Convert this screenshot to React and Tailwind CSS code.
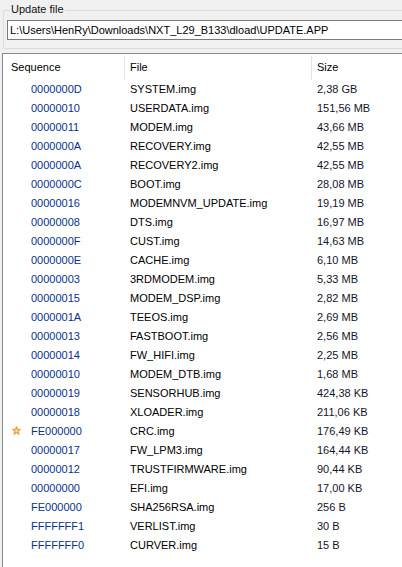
import React from "react";

const rows = [
  ["0000000D", "SYSTEM.img", "2,38 GB"],
  ["00000010", "USERDATA.img", "151,56 MB"],
  ["00000011", "MODEM.img", "43,66 MB"],
  ["0000000A", "RECOVERY.img", "42,55 MB"],
  ["0000000A", "RECOVERY2.img", "42,55 MB"],
  ["0000000C", "BOOT.img", "28,08 MB"],
  ["00000016", "MODEMNVM_UPDATE.img", "19,19 MB"],
  ["00000008", "DTS.img", "16,97 MB"],
  ["0000000F", "CUST.img", "14,63 MB"],
  ["0000000E", "CACHE.img", "6,10 MB"],
  ["00000003", "3RDMODEM.img", "5,33 MB"],
  ["00000015", "MODEM_DSP.img", "2,82 MB"],
  ["0000001A", "TEEOS.img", "2,69 MB"],
  ["00000013", "FASTBOOT.img", "2,56 MB"],
  ["00000014", "FW_HIFI.img", "2,25 MB"],
  ["00000010", "MODEM_DTB.img", "1,68 MB"],
  ["00000019", "SENSORHUB.img", "424,38 KB"],
  ["00000018", "XLOADER.img", "211,06 KB"],
  ["FE000000", "CRC.img", "176,49 KB", true],
  ["00000017", "FW_LPM3.img", "164,44 KB"],
  ["00000012", "TRUSTFIRMWARE.img", "90,44 KB"],
  ["00000000", "EFI.img", "17,00 KB"],
  ["FE000000", "SHA256RSA.img", "256 B"],
  ["FFFFFFF1", "VERLIST.img", "30 B"],
  ["FFFFFFF0", "CURVER.img", "15 B"],
];

function Star() {
  return (
    <svg width="9" height="9" viewBox="0 0 10 10" className="-mt-[3px]">
      <polygon
        points="5,0.5 6.3,3.6 9.6,3.8 7.1,6 7.9,9.4 5,7.6 2.1,9.4 2.9,6 0.4,3.8 3.7,3.6"
        fill="#f2b34a"
        stroke="#e08a1e"
        strokeWidth="0.8"
      />
      <circle cx="5" cy="5.3" r="1.4" fill="#fbe3a6" />
    </svg>
  );
}

export default function App() {
  return (
    <div
      className="w-[402px] h-[567px] bg-[#f0f0f0] overflow-hidden text-[11px] text-black"
      style={{ fontFamily: '"Liberation Sans", Arial, sans-serif' }}
    >
      <div className="pt-[10px]">
        <div className="relative ml-[3px] w-[430px] h-[39px] border border-[#dcdcdc] rounded-[2px]">
          <div className="absolute left-[6px] -top-[9px] px-[1px] bg-[#f0f0f0] leading-[14px] text-[#111]">
            Update file
          </div>
          <div className="ml-[3px] mt-[9px] h-[20px] w-[420px] border border-[#7a7a7a] bg-white flex items-center pl-[2px] leading-[18px] whitespace-nowrap">
            L:\Users\HenRy\Downloads\NXT_L29_B133\dload\UPDATE.APP
          </div>
        </div>
      </div>
      <div className="mt-[4px] ml-[2px] h-[600px] border-l border-t border-[#828790] bg-white">
        <div className="flex h-[26px]">
          <div className="w-[121px] flex items-center pl-[8px]">Sequence</div>
          <div className="w-px h-[24px] self-end bg-[#e3e3e3]"></div>
          <div className="w-[186px] flex items-center pl-[5px]">File</div>
          <div className="w-px h-[24px] self-end bg-[#e3e3e3]"></div>
          <div className="flex-1 flex items-center pl-[5px]">Size</div>
        </div>
        {rows.map((r, i) => (
          <div key={i} className="flex h-[19px] leading-[19px] whitespace-nowrap">
            <div className="w-[121px] flex items-center pl-[9px]">
              <div className="w-[19px] flex items-center">{r[3] ? <Star /> : null}</div>
              <span className="text-[#08318f]">{r[0]}</span>
            </div>
            <div className="w-[187px] pl-[6px]">{r[1]}</div>
            <div className="flex-1 pl-[6px] text-[#14142a]">{r[2]}</div>
          </div>
        ))}
      </div>
    </div>
  );
}
